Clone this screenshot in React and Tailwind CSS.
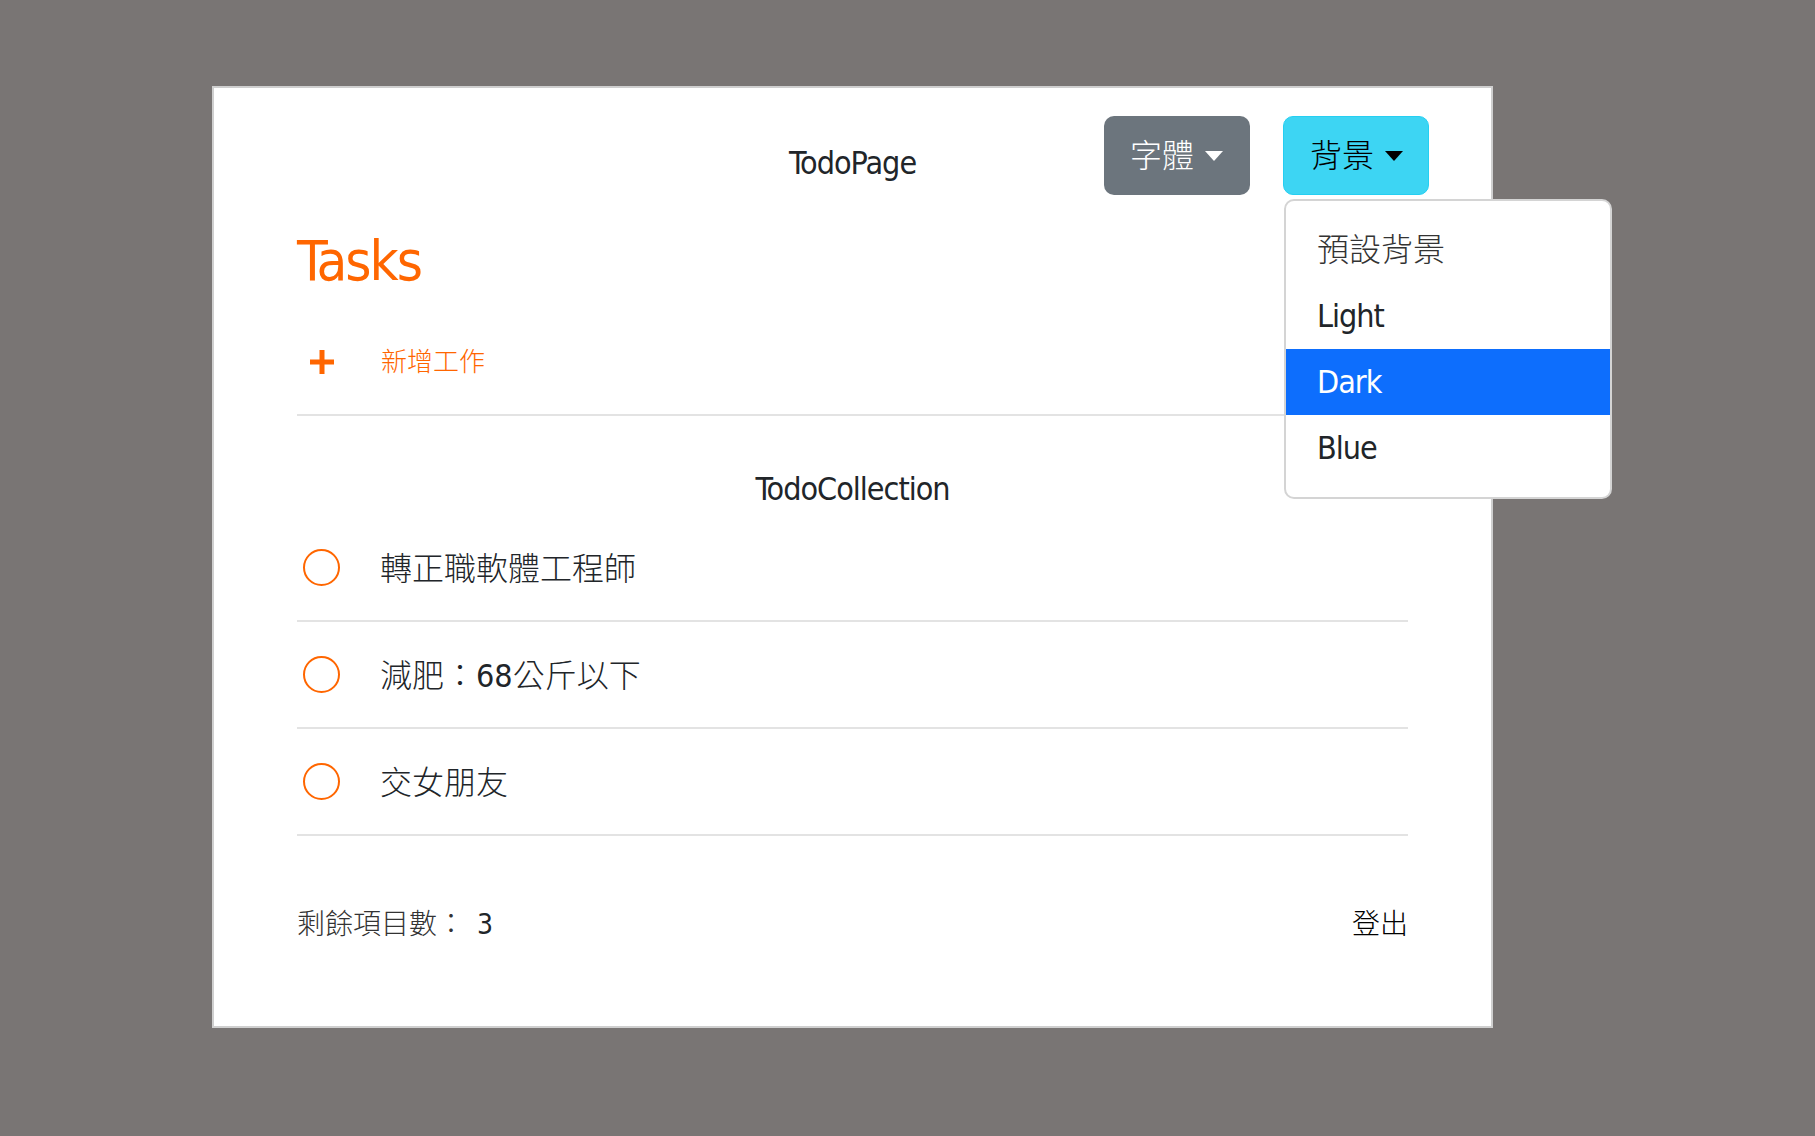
import React from 'react';

const todos = ['轉正職軟體工程師', '減肥：68公斤以下', '交女朋友'];

const Caret = ({ color }) => (
    <span className={`ml-[11px] inline-block h-0 w-0 border-x-[9px] border-t-[10px] border-x-transparent ${color}`} />
);

export default function App() {
    return (
        <div className="min-h-screen w-full bg-[#797574] pt-[86px] pl-[212px] font-['Liberation_Sans_Narrow','DejaVu_Sans_Condensed','Noto_Sans_CJK_TC',sans-serif] text-[#212529]">

            <div className="h-[942px] w-[1281px] border-2 border-[#cfcfcf] bg-white px-[83px] pt-[28px]">

                {/* Header */}
                <div className="grid h-[79px] grid-cols-[1fr_auto_1fr] items-start">
                    <div />
                    <h1 className="mt-[23px] text-[32px] leading-[48px] tracking-[-1px]">TodoPage</h1>
                    <div className="-mr-[21px] flex justify-end gap-[33px]">
                        <button className="flex h-[79px] w-[146px] items-center rounded-[10px] bg-[#6c757d] pl-[26px] text-[32px] font-light text-white">
                            字體
                            <Caret color="border-t-white" />
                        </button>
                        <div className="relative">
                            <button className="flex h-[79px] w-[146px] items-center rounded-[10px] border border-[#25cff2] bg-[#3dd5f3] pl-[26px] text-[32px] font-light text-black">
                                背景
                                <Caret color="border-t-black" />
                            </button>

                            {/* Dropdown menu */}
                            <div className="absolute top-[83px] left-[1px] z-10 w-[328px] rounded-[10px] border-2 border-[#d4d4d4] bg-white py-[16px] text-[32px]">
                                <div className="flex h-[66px] items-center px-[31px] font-light text-[#333]">預設背景</div>
                                <div className="flex h-[66px] items-center px-[31px] tracking-[-1px]">Light</div>
                                <div className="flex h-[66px] items-center bg-[#0d6efd] px-[31px] tracking-[-1px] text-white">Dark</div>
                                <div className="flex h-[66px] items-center px-[31px] tracking-[-1px]">Blue</div>
                            </div>
                        </div>
                    </div>
                </div>

                {/* Tasks */}
                <h2 className="mt-[38px] text-[56px] leading-none tracking-[-2px] text-[#ff6600]">Tasks</h2>

                <div className="border-b-2 border-[#e3e3e3] pb-[28px]">
                    <div className="mt-[49px] flex h-[48px] items-center">
                        <svg className="ml-[13px] h-[24px] w-[24px]" viewBox="0 0 24 24" fill="#ff6600">
                            <rect x="9.5" y="0" width="5" height="24" />
                            <rect x="0" y="9.5" width="24" height="5" />
                        </svg>
                        <span className="ml-[47px] text-[26px] font-light text-[#ff6600]">新增工作</span>
                    </div>
                </div>

                {/* Collection */}
                <h3 className="mt-[49px] text-center text-[32px] leading-[48px] tracking-[-1px]">TodoCollection</h3>

                <ul className="mt-[2px]">
                    {todos.map((t) => (
                        <li key={t} className="flex h-[107px] items-center border-b-2 border-[#e3e3e3]">
                            <span className="ml-[6px] h-[37px] w-[37px] rounded-full border-2 border-[#ff6600]" />
                            <span className="ml-[40px] pt-[2px] text-[32px] font-light">{t}</span>
                        </li>
                    ))}
                </ul>

                {/* Footer */}
                <div className="mt-[68px] flex items-center justify-between text-[28px] leading-[42px]">
                    <div className="font-light text-[#333]">
                        剩餘項目數：<span className="ml-[12px] font-normal text-[#212529]">3</span>
                    </div>
                    <button className="font-light text-black">登出</button>
                </div>

            </div>
        </div>
    );
}
